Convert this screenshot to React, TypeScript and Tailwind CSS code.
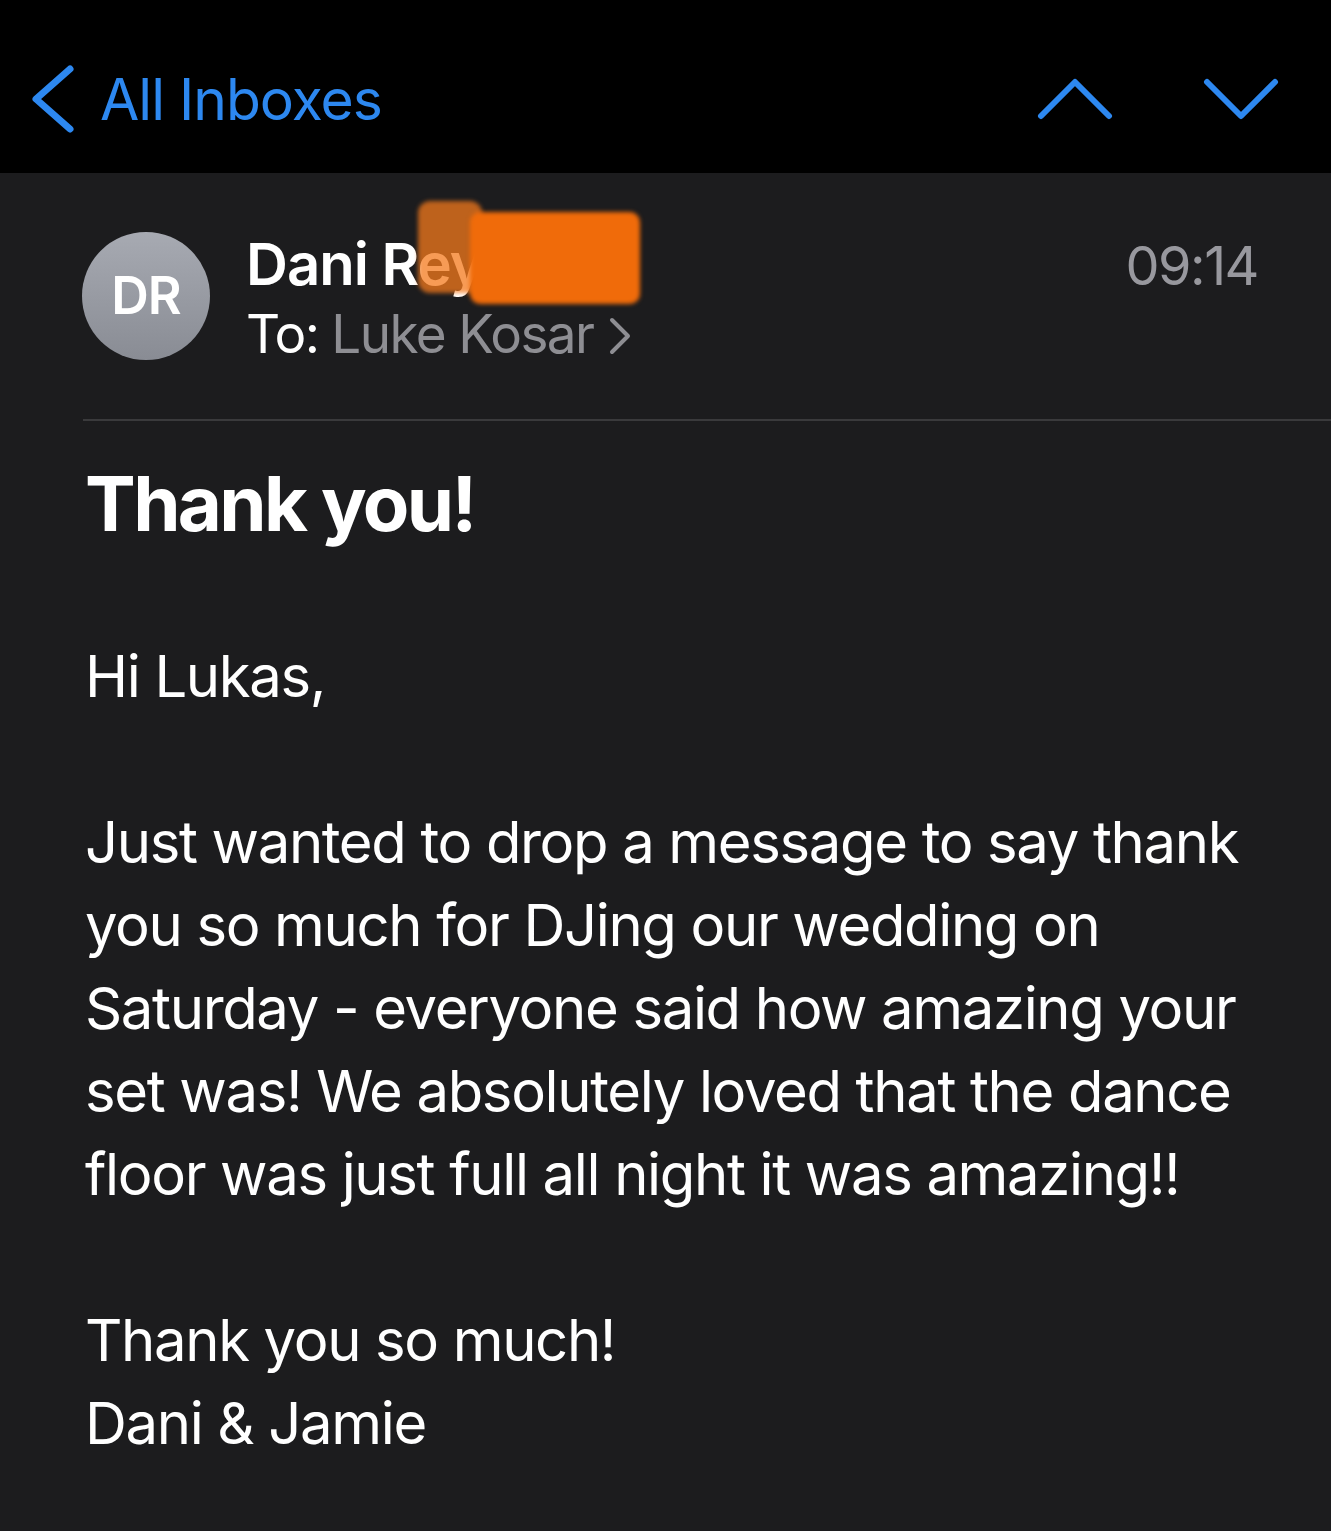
import React from "react";

export default function App() {
  return (
    <div
      className="relative w-[1331px] h-[1531px] bg-[#1c1c1e] overflow-hidden"
      style={{ fontFamily: "Inter, 'Noto Sans', sans-serif" }}
    >
      {/* Top nav */}
      <div className="h-[173px] bg-black flex items-center justify-between pt-[25px] pl-[30px] pr-[52px]">
        <div className="flex items-center">
          <svg width="46" height="70" viewBox="0 0 46 70" className="shrink-0">
            <polyline
              points="40,5 6,35 40,65"
              fill="none"
              stroke="#2d88f0"
              strokeWidth="7"
              strokeLinecap="round"
              strokeLinejoin="round"
            />
          </svg>
          <span className="ml-[24px] text-[57px] leading-none text-[#2d88f0] tracking-[-1px]">
            All Inboxes
          </span>
        </div>
        <div className="flex items-center gap-[90px]">
          <svg width="76" height="42" viewBox="0 0 76 42">
            <polyline
              points="4,38 38,4 72,38"
              fill="none"
              stroke="#2d88f0"
              strokeWidth="6"
              strokeLinecap="round"
              strokeLinejoin="round"
            />
          </svg>
          <svg width="76" height="42" viewBox="0 0 76 42">
            <polyline
              points="4,4 38,38 72,4"
              fill="none"
              stroke="#2d88f0"
              strokeWidth="6"
              strokeLinecap="round"
              strokeLinejoin="round"
            />
          </svg>
        </div>
      </div>

      {/* Sender */}
      <div className="flex items-start pt-[56px] pl-[82px] pr-[73px]">
        <div className="mt-[3px] w-[128px] h-[128px] rounded-full bg-gradient-to-b from-[#a7aab2] to-[#898c94] flex items-center justify-center shrink-0">
          <span className="text-white text-[52px] font-semibold leading-none tracking-[-1px]">DR</span>
        </div>
        <div className="ml-[36px] flex-1">
          <div className="text-[58px] leading-[70px] font-semibold text-white tracking-[-1px]">
            Dani Rey
          </div>
          <div className="flex items-center text-[53px] leading-[70px] tracking-[-1.6px]">
            <span className="text-white">To:</span>
            <span className="ml-[13px] text-[#8e8e93]">Luke Kosar</span>
            <svg width="24" height="38" viewBox="0 0 24 38" className="ml-[15px] mt-[4px]">
              <polyline
                points="4,3 20,19 4,35"
                fill="none"
                stroke="#8e8e93"
                strokeWidth="4"
                strokeLinecap="round"
                strokeLinejoin="round"
              />
            </svg>
          </div>
        </div>
        <div className="mt-[2px] text-[54px] leading-[70px] text-[#98989e] tracking-[-1.5px]">09:14</div>
      </div>

      {/* Divider */}
      <div className="mt-[50px] ml-[83px] h-[2px] bg-[#3a3a3c]" />

      {/* Body */}
      <div className="pl-[85px] pt-[36px] text-white">
        <div className="text-[76px] leading-[92px] font-bold tracking-[-2.6px]">Thank you!</div>
        <div className="mt-[86px] text-[58px] leading-[83px] whitespace-nowrap tracking-[-1.35px]">
          <div>Hi Lukas,</div>
          <div className="h-[83px]" />
          <div>Just wanted to drop a message to say thank</div>
          <div>you so much for DJing our wedding on</div>
          <div>Saturday - everyone said how amazing your</div>
          <div>set was! We absolutely loved that the dance</div>
          <div>floor was just full all night it was amazing!!</div>
          <div className="h-[83px]" />
          <div>Thank you so much!</div>
          <div>Dani &amp; Jamie</div>
        </div>
      </div>

      {/* Redaction smear */}
      <div className="absolute left-[418px] top-[201px] w-[64px] h-[92px] rounded-[12px] bg-[#f47a1c]/75 blur-[2px]" />
      <div className="absolute left-[470px] top-[212px] w-[170px] h-[92px] rounded-[10px] bg-[#f06b0a] blur-[2px]" />
    </div>
  );
}
